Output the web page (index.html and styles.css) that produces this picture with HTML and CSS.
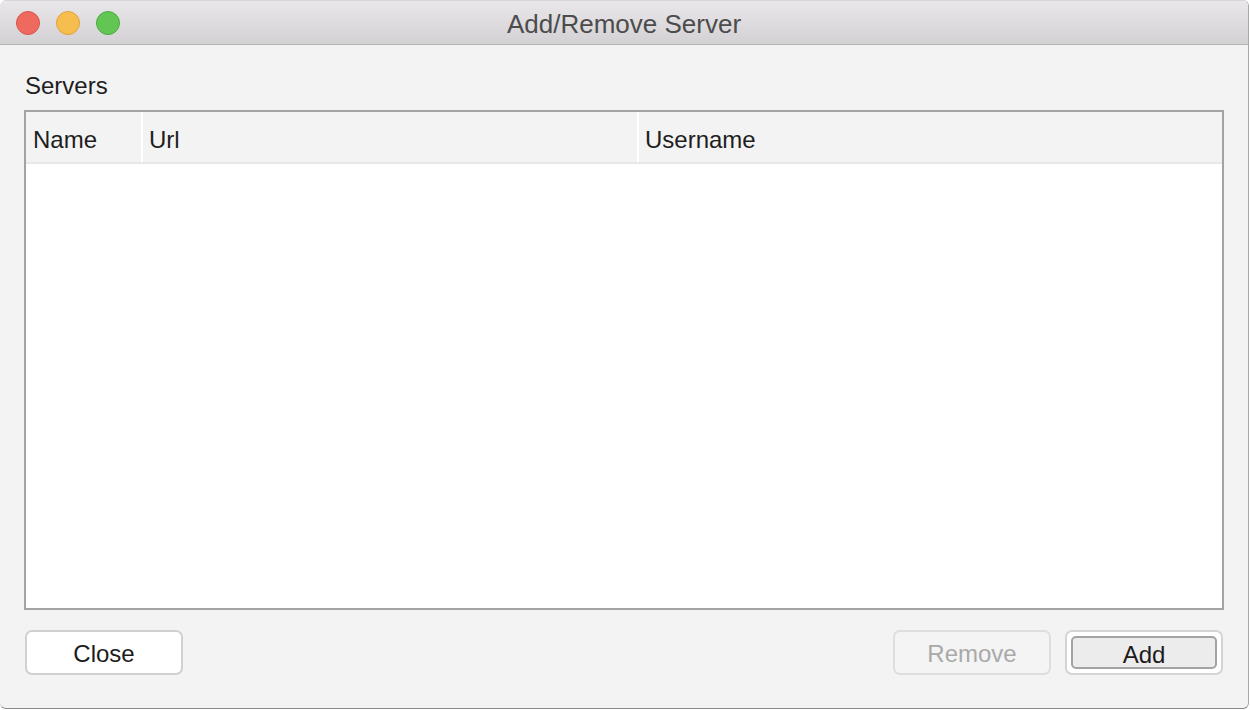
FILE: index.html
```html
<!DOCTYPE html>
<html>
<head>
<meta charset="utf-8">
<link rel="stylesheet" href="styles.css">
</head>
<body>
<div class="window">
  <div class="titlebar">
    <div class="lights">
      <span class="light red"></span>
      <span class="light yellow"></span>
      <span class="light green"></span>
    </div>
    <div class="title">Add/Remove Server</div>
  </div>
  <div class="content">
    <div class="label">Servers</div>
    <div class="table">
      <div class="thead">
        <div class="th col-name">Name</div>
        <div class="th col-url">Url</div>
        <div class="th col-user">Username</div>
      </div>
      <div class="tbody"></div>
    </div>
    <div class="buttons">
      <button class="btn">Close</button>
      <div class="spacer"></div>
      <button class="btn disabled">Remove</button>
      <div class="btn-default"><button class="btn inner">Add</button></div>
    </div>
  </div>
</div>
</body>
</html>
```
FILE: styles.css
```css
* { box-sizing: border-box; }
html, body { margin: 0; padding: 0; }
body {
  width: 1250px;
  height: 710px;
  background: #ffffff;
  font-family: "Liberation Sans", Arial, sans-serif;
  overflow: hidden;
}
.window {
  width: 1249px;
  height: 709px;
  border-right: 1px solid #a8a8a8;
  border-bottom: 1px solid #8a8a8a;
  border-radius: 6px 6px 6px 6px;
  overflow: hidden;
  background: #f3f3f3;
  display: flex;
  flex-direction: column;
}
.titlebar {
  height: 45px;
  flex: none;
  background: linear-gradient(#e9e7e9, #d3d1d3);
  border-bottom: 1px solid #b3b3b3;
  border-top: 1px solid #d6d6d6;
  display: flex;
  align-items: center;
  position: relative;
}
.lights {
  display: flex;
  gap: 16px;
  padding-left: 16px;
}
.light {
  width: 24px;
  height: 24px;
  border-radius: 50%;
  display: block;
}
.red { background: #ee6a5f; border: 1px solid #d8544a; }
.yellow { background: #f6be4f; border: 1px solid #dfa23a; }
.green { background: #62c554; border: 1px solid #4caa3f; }
.title {
  position: absolute;
  left: 0; right: 0; top: 0; bottom: 0;
  display: flex;
  align-items: center;
  justify-content: center;
  font-size: 26px;
  color: #4c4c4c;
  padding-top: 3px;
}
.content {
  flex: 1;
  padding: 28px 25px 0 24px;
  display: flex;
  flex-direction: column;
}
.label {
  font-size: 24px;
  color: #1e1e1e;
  height: 37px;
  padding-left: 1px;
  line-height: 26px;
}
.table {
  width: 1200px;
  height: 500px;
  border: 2px solid #a3a3a3;
  background: #ffffff;
  display: flex;
  flex-direction: column;
}
.thead {
  height: 52px;
  background: #f3f3f3;
  border-bottom: 2px solid #e8e8e8;
  display: flex;
  flex: none;
}
.th {
  font-size: 24px;
  color: #1e1e1e;
  display: flex;
  align-items: center;
  padding-left: 6px;
  padding-top: 5px;
  height: 50px;
}
.col-name { width: 117px; padding-left: 7px; border-right: 2px solid #ffffff; }
.col-url { width: 496px; border-right: 2px solid #ffffff; }
.col-user { flex: 1; }
.tbody { flex: 1; }
.buttons {
  display: flex;
  align-items: center;
  margin-top: 20px;
  padding-left: 1px;
}
.spacer { flex: 1; }
.btn {
  width: 158px;
  height: 45px;
  border: 2px solid #d0d0d0;
  border-radius: 7px;
  background: #ffffff;
  font-family: "Liberation Sans", Arial, sans-serif;
  font-size: 24px;
  color: #1c1c1c;
  padding: 0;
  padding-top: 2px;
}
.btn.disabled {
  background: #f4f4f4;
  border-color: #dedede;
  color: #a9a9a9;
  margin-right: 14px;
}
.btn-default {
  width: 158px;
  height: 45px;
  border: 2px solid #d4d4d4;
  border-radius: 7px;
  background: #ffffff;
  padding: 4px 4px;
  display: flex;
}
.btn.inner {
  width: 100%;
  height: 100%;
  border: 2px solid #a3a3a3;
  border-radius: 5px;
  background: #ececec;
  padding-top: 3px;
}
```
